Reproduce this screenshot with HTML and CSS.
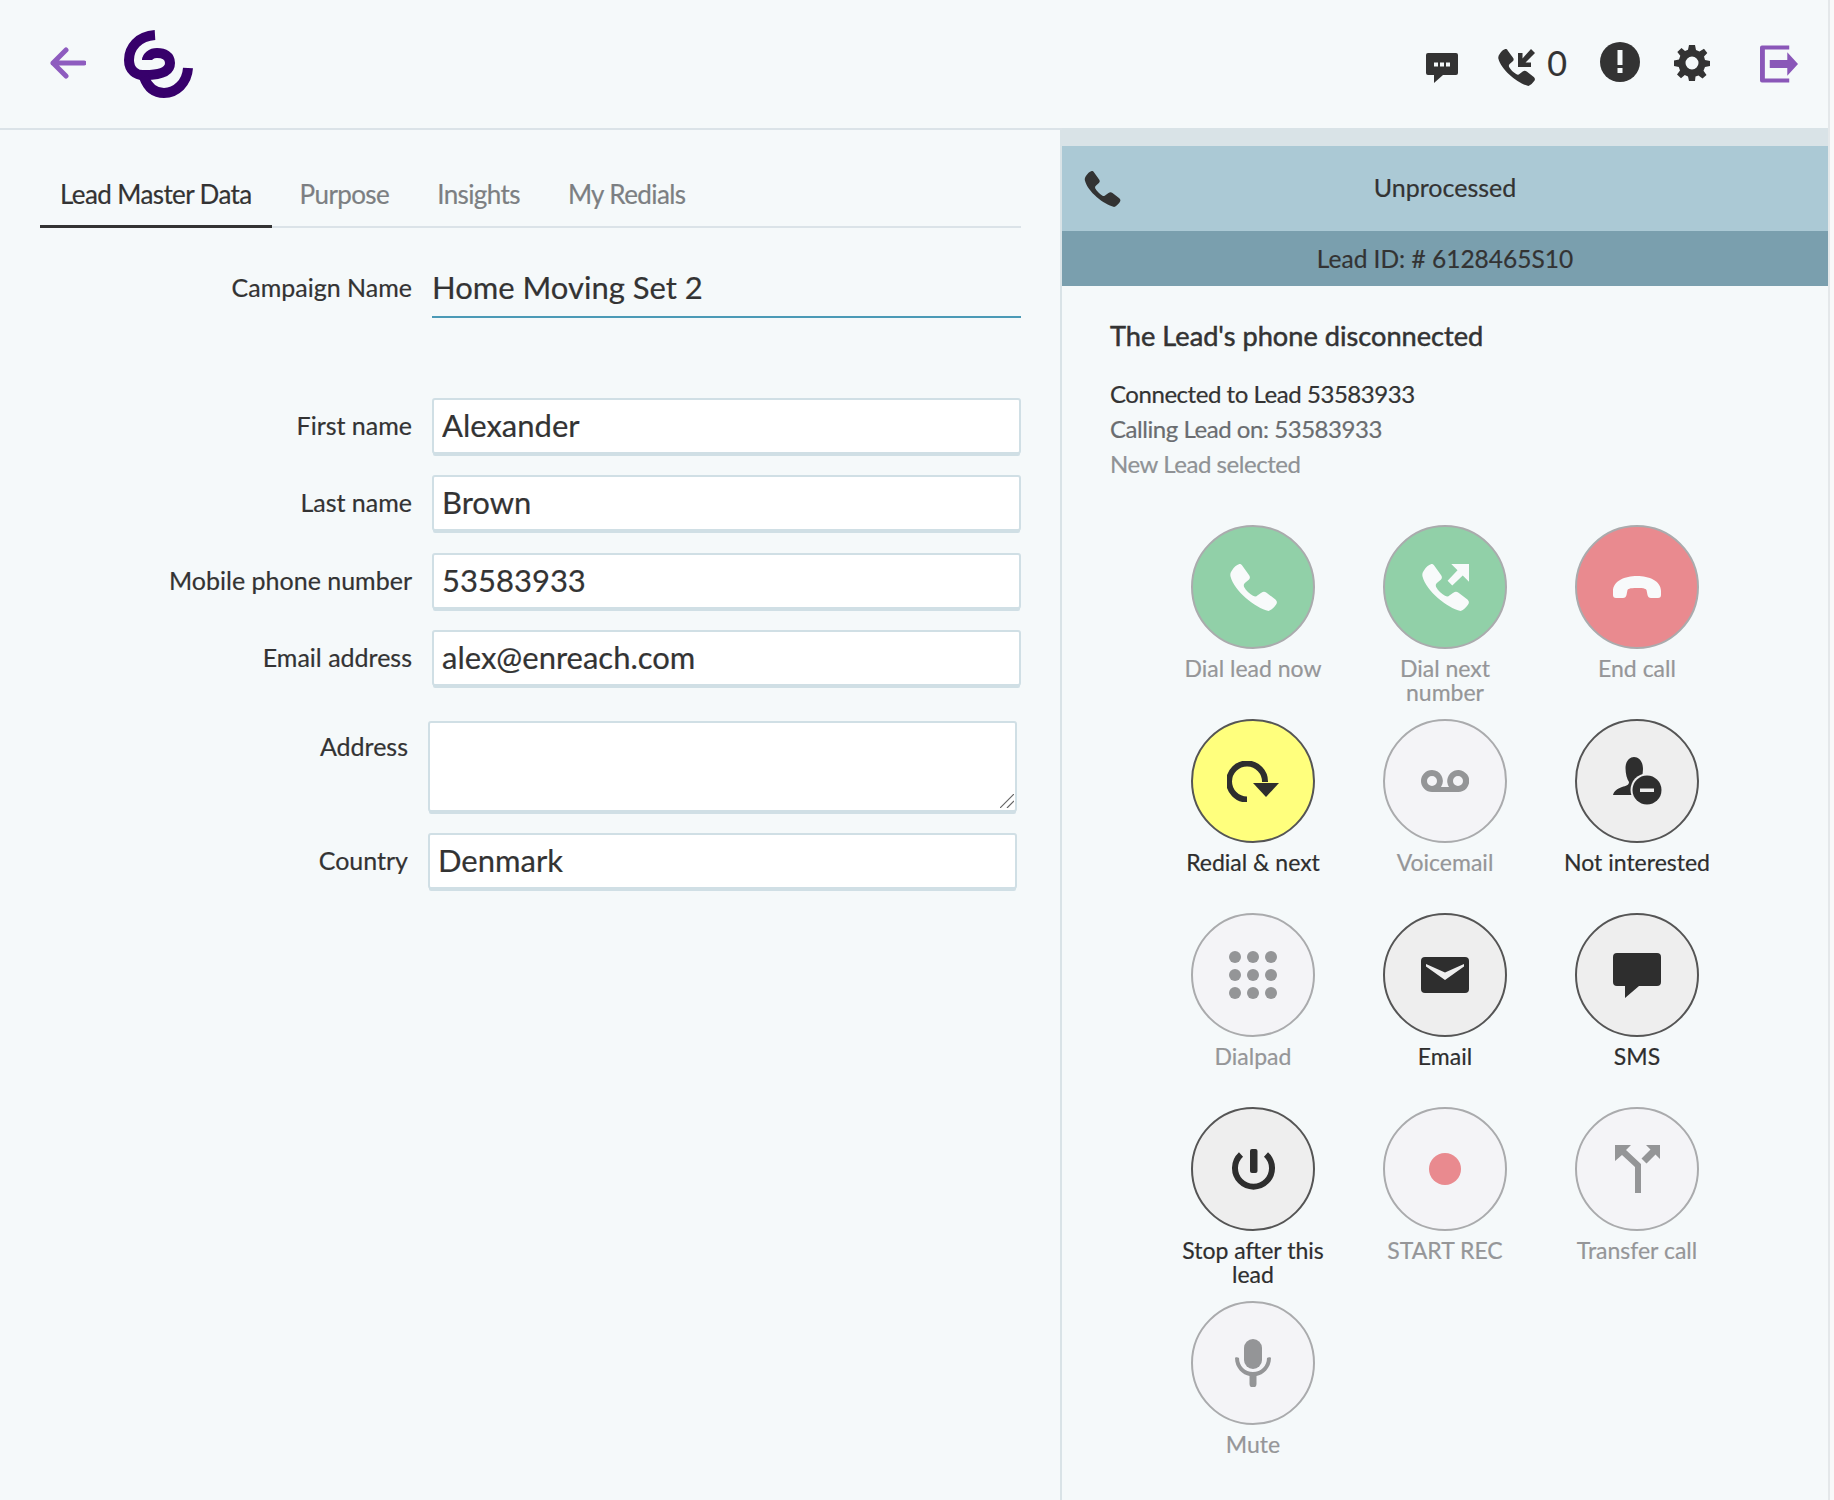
FILE: index.html
```html
<!DOCTYPE html>
<html lang="en">
<head>
<meta charset="utf-8">
<title>Lead</title>
<link rel="stylesheet" href="styles.css">
</head>
<body>
<svg class="defs" width="0" height="0" aria-hidden="true">
  <symbol id="phone" viewBox="0 0 45 45">
    <path d="M2 6C4 3 6 1 9 0 10.500 0 11 .5 12 2L18.500 11C19.500 13 19 14 18 15L14.500 18C13 19.500 13 20.500 13.500 22 15.500 25.500 18.500 28.500 22 30.500 24 31.500 25 31.500 26.500 30L30 27.500C32 26 33.500 26.500 35 27.500L43.500 34C45 35.500 45.500 37 44 39 42 41.500 40 44 37 45 24 42 4 26 .5 12 0 10 .5 8 2 6Z"/>
  </symbol>
</svg>
<div class="page">
<header class="topbar">
  <svg class="back" viewBox="0 0 36 32"><path d="M34 16H3M16 3 3 16l13 13"/></svg>
  <svg class="logo" viewBox="14 10 70 70"><path d="M45 15C28 16 19 28 19 40 19 50 26 56 35 55 50 55 60 52 60 43 60 36 54 33 47 33 41 33 37 37 37 40"/><path d="M78 48C77 63 66 73 54 73 45 73 38 68 34 57"/></svg>
  <div class="tools">
    <svg class="ic-chat" viewBox="0 0 32 30"><path d="M2 0H30A2 2 0 0 1 32 2V20A2 2 0 0 1 30 22H17L8 30V22H2A2 2 0 0 1 0 20V2A2 2 0 0 1 2 0Z"/><path class="hole" d="M8 9.500h4v4H8zM14 9.500h4v4h-4zM20 9.500h4v4h-4z"/></svg>
    <svg class="ic-missed" viewBox="0 0 37 37"><use href="#phone" width="37" height="37"/><path d="M20 18H33V13.500H27.500L37 4 33 0 24.500 9.500V4H20Z"/></svg>
    <span class="count">0</span>
    <svg class="ic-alert" viewBox="0 0 40 40"><circle cx="20" cy="20" r="20"/><path class="hole" d="M17.500 8h5v15h-5zM17.500 26h5v5h-5z"/></svg>
    <svg class="ic-gear" viewBox="0 0 36 36"><path fill-rule="evenodd" d="M15 0H21L22 5 25.500 6.500 30 3.700 33.300 8 30 11.500 31 15 36 16V21L31 22 29.500 25.700 32.500 30 28.500 33.500 24.500 30.500 21.500 31.500 21 36H15L14 31.500 10.800 30 7 33.300 3 29.500 6 25.500 4.800 22 0 21V15.500L5 14.500 6.300 10.800 3.300 7 7.500 3 11 6 14 4.800ZM18 11.500A6.500 6.500 0 1 0 18 24.500 6.500 6.500 0 0 0 18 11.500Z"/></svg>
    <svg class="ic-logout" viewBox="0 0 39 38"><path d="M30 0V4H5V34H30V38H2A2 2 0 0 1 0 36V2A2 2 0 0 1 2 0Z"/><path d="M10 15H28V7L39 19 28 31V23H10Z"/></svg>
  </div>
</header>
<main class="layout">
  <section class="lead">
    <nav class="tabs">
      <a class="tab active">Lead Master Data</a>
      <a class="tab">Purpose</a>
      <a class="tab">Insights</a>
      <a class="tab">My Redials</a>
    </nav>
    <div class="row campaign">
      <span class="label">Campaign Name</span>
      <span class="campaign-name">Home Moving Set 2</span>
    </div>
    <div class="fields">
      <label class="row"><span class="label">First name</span><input class="field" value="Alexander"></label>
      <label class="row"><span class="label">Last name</span><input class="field" value="Brown"></label>
      <label class="row"><span class="label">Mobile phone number</span><input class="field" value="53583933"></label>
      <label class="row"><span class="label">Email address</span><input class="field" value="alex@enreach.com"></label>
    </div>
    <div class="fields extra">
      <label class="row top"><span class="label">Address</span><span class="area-wrap"><textarea class="field area"></textarea><svg class="grip" viewBox="0 0 14 14"><path d="M0 14 14 0M7 14 14 7"/></svg></span></label>
      <label class="row"><span class="label">Country</span><input class="field" value="Denmark"></label>
    </div>
  </section>
  <aside class="call">
    <div class="status">
      <svg class="status-icon"><use href="#phone"/></svg>
      <span>Unprocessed</span>
    </div>
    <div class="lead-id">Lead ID: # 6128465S10</div>
    <div class="log">
      <h2>The Lead's phone disconnected</h2>
      <p class="l1">Connected to Lead 53583933</p>
      <p class="l2">Calling Lead on: 53583933</p>
      <p class="l3">New Lead selected</p>
    </div>
    <div class="actions">
      <div class="action off"><span class="btn green"><svg class="i45 white"><use href="#phone"/></svg></span><span class="cap">Dial lead now</span></div>
      <div class="action off"><span class="btn green"><svg class="i45 white" viewBox="0 0 45 45"><use href="#phone" width="45" height="45"/><path d="M45 0H28L34 6 24.500 16 29 20.500 39 11 45 17Z"/></svg></span><span class="cap">Dial next<br>number</span></div>
      <div class="action off"><span class="btn red"><svg class="i48 white" viewBox="0 1 48 22"><path d="M0 16C0 6 12 1 24 1S48 6 48 16V20C48 22 47 23 45 23H38C36 23 35 22 34.500 20L33.500 15C33 14 32 13 24 13S15 14 14.500 15L13.500 20C13 22 12 23 10 23H3C1 23 0 22 0 20Z"/></svg></span><span class="cap">End call</span></div>

      <div class="action on"><span class="btn yellow"><svg class="i52" viewBox="0 0 52 41"><path class="arc" d="M20 38.500A18 18 0 1 1 38 21"/><path d="M26 22H52L39 36Z"/></svg></span><span class="cap">Redial &amp; next</span></div>
      <div class="action off"><span class="btn"><svg class="i48 grey" viewBox="0 0 48 22"><path fill-rule="evenodd" d="M11 0A11 11 0 0 1 20 17H28A11 11 0 1 1 37 22H11A11 11 0 0 1 11 0ZM11 6A5 5 0 1 0 11 16 5 5 0 0 0 11 6ZM37 6A5 5 0 1 0 37 16 5 5 0 0 0 37 6Z"/></svg></span><span class="cap">Voicemail</span></div>
      <div class="action on"><span class="btn"><svg class="i49" viewBox="0 0 49 48"><path d="M21 0C27 0 30 6 30 12 30 18 28 22 27 25V27L24 30C22 32 21 35 20.500 38H0C1 34 4 32 9 30 13 29 16 28 16 25 14 22 12.500 17 12.500 11 12.500 5 16 0 21 0Z"/><circle class="ring" cx="34" cy="33" r="16.500"/><circle cx="34" cy="33" r="14.500"/><path class="ring" d="M27 31.500H41V35H27Z"/></svg></span><span class="cap">Not interested</span></div>

      <div class="action off"><span class="btn"><svg class="i48 grey" viewBox="0 0 48 48"><circle cx="6" cy="6" r="6"/><circle cx="24" cy="6" r="6"/><circle cx="42" cy="6" r="6"/><circle cx="6" cy="24" r="6"/><circle cx="24" cy="24" r="6"/><circle cx="42" cy="24" r="6"/><circle cx="6" cy="42" r="6"/><circle cx="24" cy="42" r="6"/><circle cx="42" cy="42" r="6"/></svg></span><span class="cap">Dialpad</span></div>
      <div class="action on"><span class="btn"><svg class="i48" viewBox="0 0 48 36"><path d="M4 0H44A4 4 0 0 1 48 4V32A4 4 0 0 1 44 36H4A4 4 0 0 1 0 32V4A4 4 0 0 1 4 0Z"/><path class="ring" d="M5 7 24 15.500 43 7V9.500L24 23 5 9.500Z"/></svg></span><span class="cap">Email</span></div>
      <div class="action on"><span class="btn"><svg class="i48" viewBox="0 0 48 45"><path d="M4 0H44A4 4 0 0 1 48 4V29A4 4 0 0 1 44 33H26L12 45V33H4A4 4 0 0 1 0 29V4A4 4 0 0 1 4 0Z"/></svg></span><span class="cap">SMS</span></div>

      <div class="action on"><span class="btn"><svg class="i43" viewBox="0 0 43 41"><path class="pw" d="M9 5.500A18.500 18.500 0 1 0 34 5.500"/><rect x="18" y="0" width="7.500" height="24" rx="2"/></svg></span><span class="cap">Stop after this<br>lead</span></div>
      <div class="action off"><span class="btn"><span class="rec"></span></span><span class="cap">START REC</span></div>
      <div class="action off"><span class="btn"><svg class="i46 grey" viewBox="0 0 45 48"><path d="M0 0H16L11 5 26 19V48H20V22L7 10 0 16Z"/><path d="M45 0H31L35.500 4.500 26.500 13.500 31.500 18.500 40.500 9.500 45 14Z"/></svg></span><span class="cap">Transfer call</span></div>

      <div class="action off"><span class="btn"><svg class="i36 grey" viewBox="0 0 36 48"><rect x="9" y="0" width="18" height="30" rx="9"/><path d="M0 19C0 18 3 18 4 19 4 27 10 33 18 33S32 27 32 19C33 18 36 18 36 19 36 29 28 36 21.500 37V45A3.500 3.500 0 0 1 14.500 45V37C8 36 0 29 0 19Z"/></svg></span><span class="cap">Mute</span></div>
    </div>
  </aside>
</main>
</div>
</body>
</html>
```
FILE: styles.css
```css
* { box-sizing: border-box; }
html, body { margin: 0; height: 100%; }
body {
  background: #f9f9f9;
  color: #333;
  font-family: "Lato", "Open Sans", sans-serif;
  height: 1500px;
  overflow: hidden;
  -webkit-text-stroke: .2px currentColor;
}
.page { width: 1830px; height: 1500px; background: #f5f9fa; border-right: 2px solid #e4e8ea; }
.defs { position: absolute; }
svg { fill: currentColor; display: block; }
.topbar {
  height: 130px;
  border-bottom: 2px solid #dbe3e8;
  display: flex;
  align-items: flex-start;
  padding: 47px 30px 0 50px;
}
.back { width: 36px; height: 32px; fill: none; stroke: #8e5cbf; stroke-width: 5; stroke-linecap: round; stroke-linejoin: round; }
.logo { width: 70px; height: 70px; margin: -17px 0 0 38px; fill: none; stroke: #37006b; stroke-width: 10; }
.tools { margin-left: auto; display: flex; align-items: flex-start; color: #333; }
.ic-chat { width: 32px; height: 30px; margin-top: 6px; }
.hole { fill: #f5f9fa; }
.ring { fill: #eee; }
.ic-missed { width: 37px; height: 37px; margin: 2px 0 0 40px; }
.count { width: 20px; text-align: center; font-size: 34px; line-height: 38px; margin: -3px 0 0 12px; }
.ic-alert { width: 40px; height: 40px; margin: -5px 0 0 33px; }
.ic-gear { width: 36px; height: 36px; margin: -2px 0 0 34px; }
.ic-logout { width: 38px; height: 38px; margin: -2px 0 0 50px; color: #8a57b8; }
.layout { display: grid; grid-template-columns: 1060px 768px; height: 1370px; }
.lead { padding: 28px 39px 0 40px; }
.tabs { display: flex; border-bottom: 2px solid #dbe3e8; height: 70px; }
.tab { font-size: 26px; letter-spacing: -.6px; color: #7c7f82; padding: 20px 20px 0; height: 70px; margin-right: 8px; }
.tab.active { color: #333; border-bottom: 3px solid #333; }
.row { display: grid; grid-template-columns: 372px 1fr; column-gap: 20px; align-items: center; }
.row.top { align-items: start; }
.label { font-size: 25px; text-align: right; padding-bottom: 2px; }
.row.top .label { padding-top: 10px; }
.campaign { margin-top: 30px; height: 60px; }
.campaign-name { font-size: 31px; border-bottom: 2px solid #4b9ab6; height: 60px; line-height: 58px; }
.fields { display: flex; flex-direction: column; gap: 21.330px; margin-top: 80px; }
.field {
  display: block;
  width: 100%;
  height: 56px;
  border: 2px solid #d0dfe5;
  border-radius: 3px;
  box-shadow: 0 3px 0 -1px #d0dfe5;
  background: #fff;
  color: #333;
  font: 31px "Lato", sans-serif;
  padding: 0 8px 2px;
  outline: none;
}
.area-wrap { display: block; position: relative; }
.area { height: 91px; resize: none; }
.grip { position: absolute; right: 3px; bottom: 4px; width: 14px; height: 14px; fill: none; stroke: #666; stroke-width: 1.200; }
.extra { margin: 35px 4px 0 -4px; }
.call { border-left: 2px solid #d9e3e7; }
.status {
  margin-top: 16px;
  height: 85px;
  background: #abc9d5;
  display: flex;
  align-items: center;
  justify-content: center;
  font-size: 25px;
  padding-bottom: 4px;
  position: relative;
  box-shadow: 0 -18px 0 #d9e3e7;
}
.status-icon { position: absolute; left: 22px; top: 25px; width: 37px; height: 36px; }
.lead-id { height: 55px; background: #7a9fae; display: flex; align-items: center; justify-content: center; font-size: 24.500px; }
.log { padding: 33px 0 0 48px; }
.log h2 { margin: 0 0 23px; font-size: 27.200px; font-weight: 400; line-height: 34px; -webkit-text-stroke: .5px currentColor; }
.log p { margin: 0; font-size: 24px; letter-spacing: -.45px; line-height: 35px; }
.l2 { color: #6a6d70; }
.l3 { color: #8f9295; }
.actions { display: grid; grid-template-columns: repeat(3, 192px); grid-auto-rows: 194px; justify-content: center; margin-top: 44px; }
.action { display: flex; flex-direction: column; align-items: center; text-align: center; }
.btn {
  width: 124px; height: 124px; flex: none;
  border-radius: 50%;
  border: 2px solid #aaabad;
  background: #f4f4f7;
  display: flex; align-items: center; justify-content: center;
  color: #949597;
}
.on .btn { border-color: #555; background: #eee; color: #2e2e2e; }
.btn.green { background: #91d0a8; }
.btn.red { background: #e98a8f; }
.on .btn.yellow { background: #ffff7d; }
.white { color: #f8fafb; }
.grey { color: #949597; }
.i45 { width: 47px; height: 47px; }
.i48 { width: 48px; }
.i52 { width: 52px; height: 41px; }
.i49 { width: 49px; height: 48px; }
.i43 { width: 43px; height: 41px; }
.i46 { width: 45px; height: 48px; }
.i36 { width: 36px; height: 48px; }
.arc { fill: none; stroke: currentColor; stroke-width: 6; }
.pw { fill: none; stroke: currentColor; stroke-width: 6; }
.rec { width: 32px; height: 32px; border-radius: 50%; background: #e98a8f; }
.cap { font-size: 23px; line-height: 24px; margin-top: 7px; color: #959698; }
.on .cap { color: #2e2e2e; }
```
